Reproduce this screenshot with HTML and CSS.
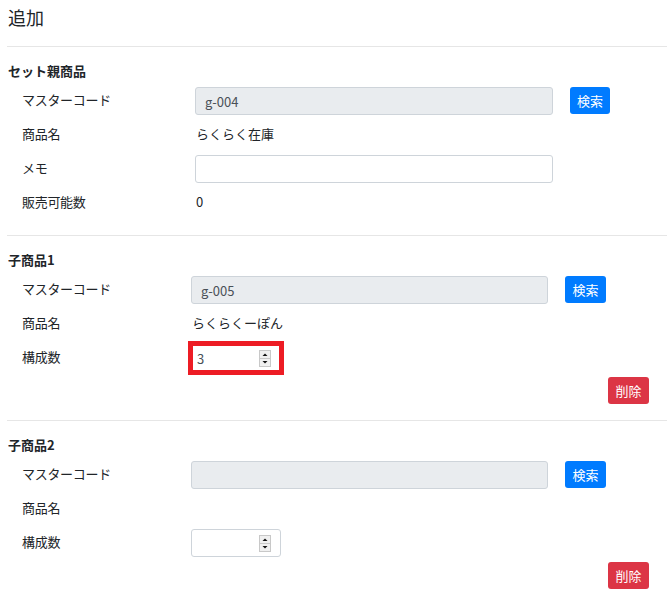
FILE: index.html
```html
<!DOCTYPE html>
<html>
<head lang="ja">
    <meta charset="UTF-8">
    <title>追加</title>
    <link rel="stylesheet" href="styles.css">
</head>
<body>
<div id="page">
    <h1 class="title">追加</h1>

    <div class="section parent">
        <h2 class="section-title">セット親商品</h2>
        <div class="row">
            <div class="label">マスターコード</div>
            <input class="field" type="text" value="g-004" disabled>
            <button class="btn btn-blue">検索</button>
        </div>
        <div class="row">
            <div class="label">商品名</div>
            <div class="value">らくらく在庫</div>
        </div>
        <div class="row">
            <div class="label">メモ</div>
            <input class="field" type="text" value="">
        </div>
        <div class="row">
            <div class="label">販売可能数</div>
            <div class="value">0</div>
        </div>
    </div>

    <div class="section child">
        <h2 class="section-title">子商品1</h2>
        <div class="row">
            <div class="label">マスターコード</div>
            <input class="field" type="text" value="g-005" disabled>
            <button class="btn btn-blue">検索</button>
        </div>
        <div class="row">
            <div class="label">商品名</div>
            <div class="value">らくらくーぽん</div>
        </div>
        <div class="row">
            <div class="label">構成数</div>
            <div class="number marked">
                <input type="text" value="3">
                <span class="spin">
                    <svg width="12" height="17" viewBox="0 0 12 17">
                        <rect x="0.5" y="0.5" width="11" height="16" fill="#f0f0f0" stroke="#c8c8c8"/>
                        <line x1="1" y1="8.5" x2="11" y2="8.5" stroke="#c8c8c8"/>
                        <path d="M6 3.5 L8.5 6 L3.5 6 Z" fill="#111"/>
                        <path d="M3.5 11 L8.5 11 L6 13.5 Z" fill="#111"/>
                    </svg>
                </span>
            </div>
        </div>
        <div class="actions">
            <button class="btn btn-red">削除</button>
        </div>
    </div>

    <div class="section child">
        <h2 class="section-title">子商品2</h2>
        <div class="row">
            <div class="label">マスターコード</div>
            <input class="field" type="text" value="" disabled>
            <button class="btn btn-blue">検索</button>
        </div>
        <div class="row">
            <div class="label">商品名</div>
            <div class="value"></div>
        </div>
        <div class="row">
            <div class="label">構成数</div>
            <div class="number">
                <input type="text" value="">
                <span class="spin">
                    <svg width="12" height="17" viewBox="0 0 12 17">
                        <rect x="0.5" y="0.5" width="11" height="16" fill="#f0f0f0" stroke="#c8c8c8"/>
                        <line x1="1" y1="8.5" x2="11" y2="8.5" stroke="#c8c8c8"/>
                        <path d="M6 3.5 L8.5 6 L3.5 6 Z" fill="#111"/>
                        <path d="M3.5 11 L8.5 11 L6 13.5 Z" fill="#111"/>
                    </svg>
                </span>
            </div>
        </div>
        <div class="actions">
            <button class="btn btn-red">削除</button>
        </div>
    </div>
</div>
</body>
</html>
```

FILE: styles.css
```css
*{
    margin: 0;
    padding: 0;
    box-sizing: border-box;
}
body{
    background: #ffffff;
    color: #212529;
    font-family: "Noto Sans CJK JP", "Noto Sans", sans-serif;
    font-size: 13px;
}
#page{
    padding-left: 7px;
}
.title{
    padding: 5px 0 17px 1px;
    font-size: 18px;
    line-height: 24px;
    font-weight: normal;
}
.section{
    border-top: 1px solid #e6e6e6;
    padding: 14px 0 18px;
}
.section.child{
    padding-bottom: 16px;
}
.section-title{
    padding-left: 1px;
    font-size: 13px;
    line-height: 20px;
    font-weight: bold;
}
.row{
    display: flex;
    align-items: center;
    height: 28px;
    margin-top: 6px;
}
.label{
    width: 188px;
    padding-left: 15px;
    padding-bottom: 3px;
    flex-shrink: 0;
    letter-spacing: -0.3px;
}
.child .label{
    width: 184px;
}
.value{
    padding-left: 1px;
    padding-bottom: 3px;
}
.field{
    width: 358px;
    height: 28px;
    padding: 0 9px;
    border: 1px solid #ced4da;
    border-radius: 3px;
    background: #ffffff;
    color: #495057;
    font-family: inherit;
    font-size: 13px;
}
.child .field{
    width: 357px;
}
.field:disabled{
    background: #e9ecef;
}
.btn{
    height: 27px;
    padding: 0 6px;
    border: 0;
    border-radius: 3px;
    color: #ffffff;
    font-family: inherit;
    font-size: 13px;
    line-height: 27px;
    cursor: pointer;
}
.row .btn{
    margin-left: 17px;
    align-self: flex-start;
    width: 40px;
}
.child .row .btn{
    width: 41px;
}
.btn-blue{
    background: #007bff;
}
.btn-red{
    width: 41px;
    background: #dc3545;
}
.actions{
    display: flex;
    justify-content: flex-end;
    padding-right: 18px;
    margin-top: 5px;
}
.number{
    display: flex;
    align-items: center;
    width: 90px;
    height: 28px;
    border: 1px solid #ced4da;
    border-radius: 3px;
    background: #ffffff;
}
.number input{
    width: 64px;
    height: 26px;
    padding-left: 5px;
    border: 0;
    outline: none;
    background: transparent;
    color: #495057;
    font-family: inherit;
    font-size: 13px;
}
.spin{
    display: flex;
    margin-left: 3px;
}
.marked{
    border-radius: 0;
    outline: 5px solid #ed1c24;
    outline-offset: -2px;
}
```
